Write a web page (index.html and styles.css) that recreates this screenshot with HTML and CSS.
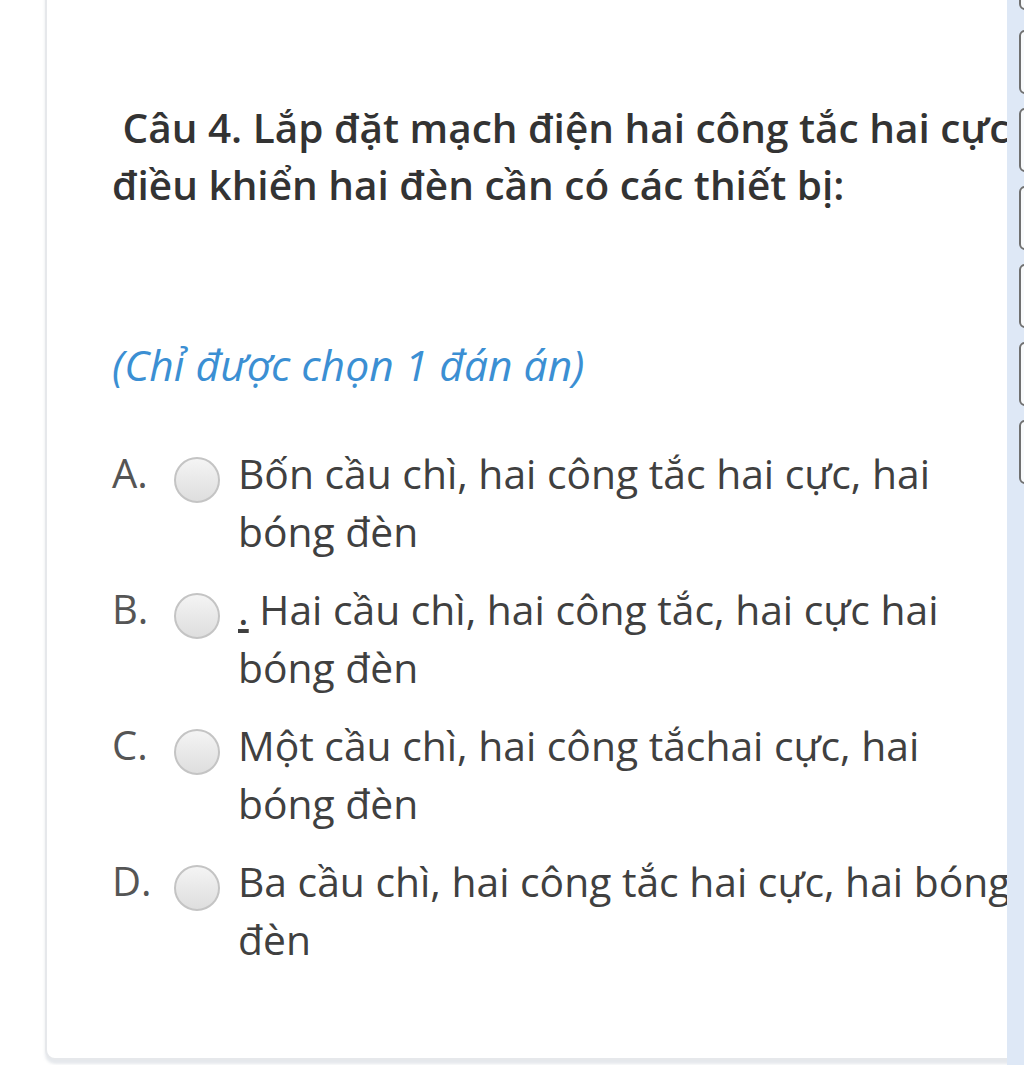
FILE: index.html
```html
<!DOCTYPE html>
<html lang="vi">
  <head>
    <meta charset="UTF-8" />
    <title>Câu 4</title>
    <link rel="stylesheet" href="styles.css">
  </head>
  <body>
    <div class="page">
      <div class="card">
        <h2 class="question">&nbsp;Câu 4. Lắp đặt mạch điện hai công tắc hai cực<br>điều khiển hai đèn cần có các thiết bị:</h2>
        <p class="hint">(Chỉ được chọn 1 đán án)</p>

        <ul class="answers">
          <li class="answer">
            <span class="letter">A.</span>
            <span class="radio"></span>
            <span class="text">Bốn cầu chì, hai công tắc hai cực, hai<br>bóng đèn</span>
          </li>
          <li class="answer">
            <span class="letter">B.</span>
            <span class="radio"></span>
            <span class="text"><u>.</u> Hai cầu chì, hai công tắc, hai cực hai<br>bóng đèn</span>
          </li>
          <li class="answer">
            <span class="letter">C.</span>
            <span class="radio"></span>
            <span class="text">Một cầu chì, hai công tắchai cực, hai<br>bóng đèn</span>
          </li>
          <li class="answer">
            <span class="letter">D.</span>
            <span class="radio"></span>
            <span class="text">Ba cầu chì, hai công tắc hai cực, hai bóng<br>đèn</span>
          </li>
        </ul>
      </div>

      <div class="sidebar">
        <span class="qbtn first"></span>
        <span class="qbtn"></span>
        <span class="qbtn"></span>
        <span class="qbtn"></span>
        <span class="qbtn"></span>
        <span class="qbtn"></span>
        <span class="qbtn"></span>
      </div>
    </div>
  </body>
</html>
```

FILE: styles.css
```css
* {
  box-sizing: border-box;
}

html,
body {
  margin: 0;
  padding: 0;
  background-color: #ffffff;
  overflow: hidden;
}

body {
  font-family: "Open Sans", "Noto Sans", sans-serif;
  color: #333;
}

.page {
  position: relative;
  width: 1024px;
  height: 1065px;
  overflow: hidden;
}

.card {
  margin-left: 45px;
  margin-top: -20px;
  width: 1010px;
  height: 1080px;
  padding: 117px 0 0 65px;
  background-color: #ffffff;
  border: 2px solid #e6e8eb;
  border-radius: 0 0 10px 10px;
  box-shadow: 0 4px 3px rgba(180, 190, 200, 0.35);
}

.question {
  margin: 0;
  font-size: 40.5px;
  font-weight: 600;
  line-height: 57px;
  color: #333;
  white-space: nowrap;
}

.hint {
  margin: 123px 0 0;
  font-size: 42.6px;
  font-style: italic;
  line-height: 57px;
  color: #3b8fd3;
}

.answers {
  list-style: none;
  margin: 51px 0 0;
  padding: 0;
}

.answer {
  display: flex;
  align-items: flex-start;
  margin-bottom: 20px;
}

.letter {
  width: 62px;
  font-size: 40px;
  line-height: 58px;
  color: #555;
}

.radio {
  flex: none;
  width: 46px;
  height: 46px;
  margin-top: 13px;
  margin-right: 18px;
  border: 2px solid #c4c4c4;
  border-radius: 50%;
  background: linear-gradient(#f4f4f4, #dedede);
}

.text {
  font-size: 40.8px;
  line-height: 58px;
  color: #404040;
  white-space: nowrap;
}

.text u {
  text-underline-offset: 4px;
}

.sidebar {
  position: absolute;
  top: 0;
  right: 0;
  width: 17px;
  height: 100%;
  padding-top: 30px;
  background-color: #dee8f6;
  display: flex;
  flex-direction: column;
  gap: 14px;
}

.qbtn {
  display: block;
  flex: none;
  width: 20px;
  height: 64px;
  margin-left: 12px;
  border: 2px solid #707070;
  border-radius: 6px;
  background-color: #f8fafc;
}

.qbtn.first {
  position: absolute;
  top: -54px;
}
```
